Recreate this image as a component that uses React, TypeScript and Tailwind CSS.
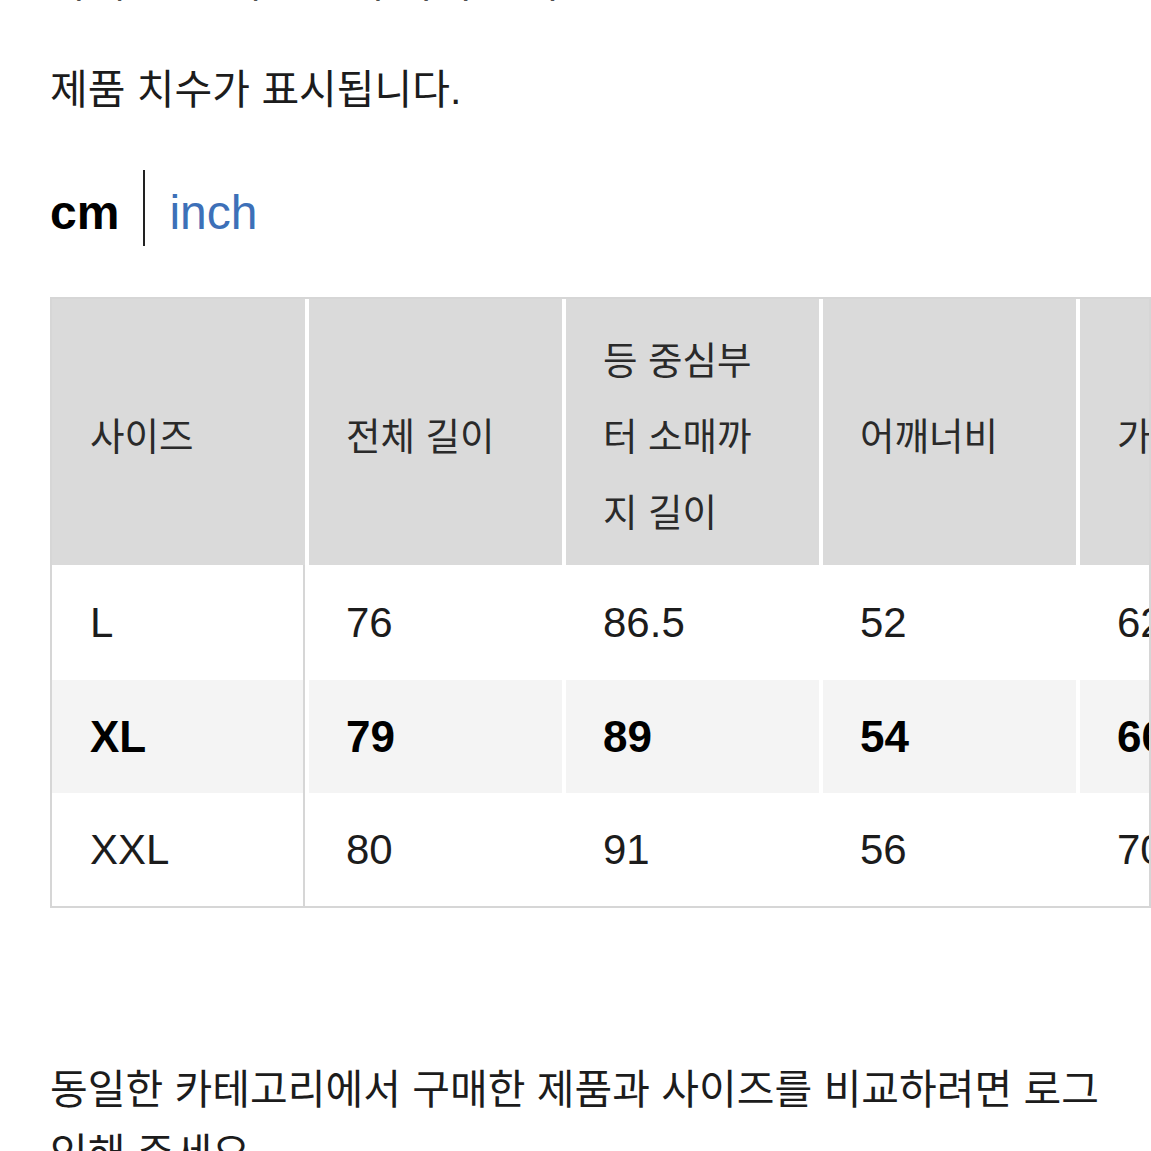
import React from "react";

const headers = ["사이즈", "전체 길이", "등 중심부터 소매까지 길이", "어깨너비", "가슴너비", "소매 길이"];

const rows = [
  { size: "L", values: ["76", "86.5", "52", "62", "61"], active: false },
  { size: "XL", values: ["79", "89", "54", "66", "62.5"], active: true },
  { size: "XXL", values: ["80", "91", "56", "70", "64"], active: false },
];

const App = () => {
  return (
    <div className="min-h-screen bg-white pl-[50px] text-[#1c1c1c] font-['Liberation_Sans','Noto_Sans_CJK_KR',sans-serif] overflow-hidden">
      {/* section title, scrolled mostly out of view */}
      <p className="mt-[-45px] text-[41px] leading-[57px] whitespace-nowrap">아래 표는 제품 실측 사이즈 기준</p>

      <p className="mt-[50px] text-[41px] leading-[57px]">제품 치수가 표시됩니다.</p>

      {/* unit switch */}
      <div className="mt-[51px] flex items-center gap-6">
        <span className="mt-[10px] text-[48px] font-bold leading-none text-black">cm</span>
        <div className="h-[76px] w-[2px] bg-[#222]" />
        <span className="mt-[10px] text-[48px] leading-none text-[#3d70b8]">inch</span>
      </div>

      {/* size table */}
      <div className="mt-[51px] w-[1101px] overflow-hidden border-2 border-[#d6d6d6]">
        <div className="grid w-max grid-cols-[253px_253px_253px_253px_253px_253px] grid-rows-[266px_115px_113px_113px] gap-x-1">
          {headers.map((h, i) => (
            <div
              key={h}
              className={`flex items-center bg-[#dadada] pr-6 pt-[10px] text-[37.5px] leading-[76px] text-[#2a2a2a] ${i === 0 ? "pl-[38px]" : "pl-[37px]"}`}
            >
              <span className={i === 2 ? "w-[166px]" : ""}>{h}</span>
            </div>
          ))}
          {rows.map((r) => (
            <React.Fragment key={r.size}>
              <div
                className={`flex items-center border-r-2 border-[#d6d6d6] pl-[38px] ${r.active ? "bg-[#f4f4f4] text-[44px] font-bold text-black" : "bg-white text-[42px]"}`}
              >
                {r.size}
              </div>
              {r.values.map((v, j) => (
                <div
                  key={j}
                  className={`flex items-center pl-[37px] ${r.active ? "bg-[#f4f4f4] text-[44px] font-bold text-black" : "bg-white text-[42px]"}`}
                >
                  {v}
                </div>
              ))}
            </React.Fragment>
          ))}
        </div>
      </div>

      <p className="mt-[150px] w-[1060px] text-[41px] leading-[64px]">
        동일한 카테고리에서 구매한 제품과 사이즈를 비교하려면 로그인해 주세요.
      </p>
    </div>
  );
};

export default App;
